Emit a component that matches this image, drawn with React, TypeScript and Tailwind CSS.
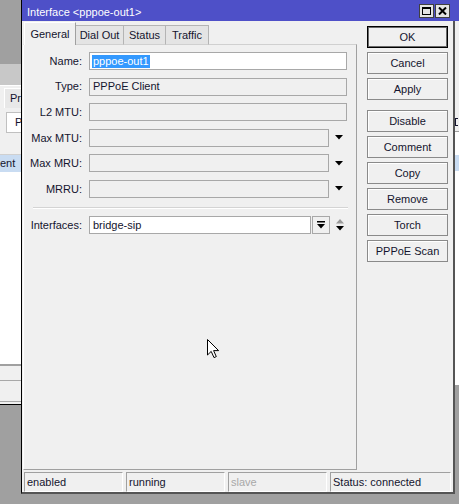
import React from "react";

const Arrow = ({ color = "#000" }: { color?: string }) => (
  <svg width="8" height="5" viewBox="0 0 8 5">
    <path d="M0 0 L8 0 L4 4.5 Z" fill={color} />
  </svg>
);

const Field = ({
  label,
  value,
  white,
  selected,
  narrow,
}: {
  label: string;
  value?: string;
  white?: boolean;
  selected?: boolean;
  narrow?: boolean;
}) => (
  <div className="flex items-center h-[18px]">
    <div className="w-[59px] text-right pr-[1px]">{label}</div>
    <div
      className={`ml-[6px] h-[18px] border border-[#a8a8a8] flex items-center pl-[2px] ${
        narrow ? "w-[240px]" : "w-[258px]"
      } ${white ? "bg-white" : "bg-[#f0f0f0]"}`}
    >
      {selected ? (
        <span className="bg-[#3399ff] text-white px-[1px] leading-[13px]">{value}</span>
      ) : (
        <span className="pl-[1px]">{value}</span>
      )}
    </div>
    {narrow && (
      <div className="ml-[6px] flex items-center">
        <Arrow />
      </div>
    )}
  </div>
);

const Btn = ({ label, focus }: { label: string; focus?: boolean }) => (
  <div
    className={`w-[81px] h-[22px] flex items-center justify-center bg-[#f0f0f0] border ${
      focus
        ? "border-black shadow-[inset_0_0_0_1px_#6a6a6a]"
        : "border-[#8a8a8a] shadow-[inset_1px_1px_0_#ffffff]"
    }`}
  >
    {label}
  </div>
);

const StatusCell = ({ text, w, dim }: { text: string; w: string; dim?: boolean }) => (
  <div
    className={`${w} h-[20px] border-t border-l border-[#a0a0a0] border-b border-r border-b-white border-r-white flex items-center pl-[2px] ${
      dim ? "text-[#a8a8a8]" : ""
    }`}
  >
    {text}
  </div>
);

function LeftStrip() {
  return (
    <div className="w-[21px] h-[504px] flex flex-col shrink-0 overflow-hidden">
      <div className="h-[64px]" />
      <div className="h-[22px] bg-[#c8c8c8] border-b border-white" />
      <div className="h-[22px] bg-[#f0f0f0] flex items-end">
        <div className="ml-[4px] h-[20px] flex-1 border-l border-t border-white bg-[#e8e8e8] pl-[5px] flex items-center whitespace-nowrap">
          Pr
        </div>
      </div>
      <div className="h-[29px] bg-[#f0f0f0] flex items-center">
        <div className="ml-[6px] h-[21px] flex-1 bg-white border border-[#c0c0c0] pl-[8px] flex items-center">
          P
        </div>
      </div>
      <div className="h-[18px] bg-[#f0f0f0] border-b border-[#d0d0d0]" />
      <div className="h-[17px] bg-[#c9dcf2] flex items-center whitespace-nowrap">ent</div>
      <div className="h-[192px] bg-white" />
      <div className="h-[2px] bg-[#a0a0a0]" />
      <div className="h-[14px] bg-[#f0f0f0]" />
      <div className="h-[1px] bg-[#a8a8a8]" />
      <div className="h-[20px] bg-[#f0f0f0]" />
      <div className="h-[1px] bg-[#a8a8a8]" />
      <div className="h-[2px] bg-[#f0f0f0]" />
      <div className="h-[1px] bg-black" />
    </div>
  );
}

function RightStrip() {
  return (
    <div className="w-[4px] flex flex-col shrink-0 overflow-hidden">
      <div className="h-[91px] bg-[#f0f0f0]" />
      <div className="h-[19px] bg-[#f0f0f0] flex items-center">
        <div className="w-[3px] h-[8px] border-l border-t border-b border-[#14142e]" />
      </div>
      <div className="h-[1px] bg-[#a0a0a0]" />
      <div className="h-[23px] bg-white" />
      <div className="h-[16px] bg-[#c9dcf2]" />
      <div className="h-[214px] bg-white" />
    </div>
  );
}

export default function App() {
  return (
    <div className="w-[459px] h-[504px] bg-[#a0a0a0] flex overflow-hidden relative font-['Liberation_Sans',Arial,sans-serif] text-[11px] text-[#14142e]">
      <LeftStrip />
      <div className="w-[438px] flex flex-col">
        {/* title bar */}
        <div className="h-[21px] border-l border-black bg-[#4e50c8] flex items-center pl-[5px] pr-[9px] text-white">
          <span className="flex-1 mt-[3px]">Interface &lt;pppoe-out1&gt;</span>
          <div className="flex gap-[1px] items-center">
            <div className="w-[15px] h-[14px] bg-[#e4e4e4] border border-[#404040] flex items-center justify-center">
              <div className="w-[9px] h-[8px] border border-black border-t-2" />
            </div>
            <div className="w-[15px] h-[14px] bg-[#e4e4e4] border border-[#404040] flex items-center justify-center">
              <svg width="9" height="8" viewBox="0 0 9 8">
                <path d="M1 0.5 L8 7.5 M8 0.5 L1 7.5" stroke="#000" strokeWidth="2" />
              </svg>
            </div>
          </div>
        </div>

        <div className="flex">
          <div className="w-[434px] h-[473px] border-l border-black border-r-2 border-b-2 border-r-[#555] border-b-[#555] bg-[#f0f0f0] flex flex-col">
            <div className="h-[450px] flex pl-[1px]">
              {/* left: tabs + panel */}
              <div className="w-[334px] flex flex-col pt-[1px]">
                <div className="h-[23px] flex items-end pl-[1px] relative z-10 -mb-[1px]">
                  <div className="w-[52px] h-[23px] bg-[#f0f0f0] border-t border-l border-white border-r border-r-[#a0a0a0] flex items-center justify-center">
                    General
                  </div>
                  <div className="w-[48px] h-[20px] bg-[#e4e4e4] border-t border-r border-[#b4b4b4] border-b border-b-[#d0d0d0] flex items-center justify-center">
                    Dial Out
                  </div>
                  <div className="w-[42px] h-[20px] bg-[#e4e4e4] border-t border-r border-[#b4b4b4] border-b border-b-[#d0d0d0] flex items-center justify-center">
                    Status
                  </div>
                  <div className="w-[43px] h-[20px] bg-[#e4e4e4] border-t border-r border-[#b4b4b4] border-b border-b-[#d0d0d0] flex items-center justify-center">
                    Traffic
                  </div>
                </div>
                <div className="h-[426px] border-t border-t-[#d0d0d0] border-l border-l-white border-r border-r-[#a0a0a0] border-b border-b-[#a0a0a0] flex flex-col pt-[7px]">
                  <div className="flex flex-col gap-[7.6px]">
                    <Field label="Name:" value="pppoe-out1" white selected />
                    <Field label="Type:" value="PPPoE Client" />
                    <Field label="L2 MTU:" />
                    <Field label="Max MTU:" narrow />
                    <Field label="Max MRU:" narrow />
                    <Field label="MRRU:" narrow />
                  </div>
                  <div className="ml-[9px] mt-[9px] w-[315px] h-[1px] bg-[#d4d4d4] border-b border-white box-content" />
                  <div className="flex items-center h-[18px] mt-[7px]">
                    <div className="w-[59px] text-right pr-[1px]">Interfaces:</div>
                    <div className="ml-[6px] w-[222px] h-[18px] border border-[#a8a8a8] bg-white flex items-center pl-[3px]">
                      bridge-sip
                    </div>
                    <div className="ml-[1px] w-[18px] h-[18px] border border-[#a8a8a8] bg-[#f0f0f0] flex items-center justify-center">
                      <svg width="8" height="8" viewBox="0 0 8 8">
                        <rect x="0" y="0" width="8" height="1.5" fill="#000" />
                        <path d="M0 3 L8 3 L4 7.5 Z" fill="#000" />
                      </svg>
                    </div>
                    <div className="ml-[6px] flex flex-col gap-[2px]">
                      <svg width="8" height="5" viewBox="0 0 8 5">
                        <path d="M0 4.5 L8 4.5 L4 0 Z" fill="#9a9a9a" />
                      </svg>
                      <Arrow />
                    </div>
                  </div>
                </div>
              </div>

              {/* right: buttons */}
              <div className="ml-[10px] pt-[5px] flex flex-col gap-[4px]">
                <Btn label="OK" focus />
                <Btn label="Cancel" />
                <Btn label="Apply" />
                <div className="mt-[6px]">
                  <Btn label="Disable" />
                </div>
                <Btn label="Comment" />
                <Btn label="Copy" />
                <Btn label="Remove" />
                <Btn label="Torch" />
                <Btn label="PPPoE Scan" />
              </div>
            </div>

            {/* status bar */}
            <div className="h-[21px] flex gap-[3px] pl-[2px] pt-[1px]">
              <StatusCell text="enabled" w="w-[99px]" />
              <StatusCell text="running" w="w-[99px]" />
              <StatusCell text="slave" w="w-[99px]" dim />
              <StatusCell text="Status: connected" w="w-[121px]" />
            </div>
          </div>
          <RightStrip />
        </div>
      </div>

      {/* mouse pointer */}
      <svg
        className="absolute left-[207px] top-[339px]"
        width="13"
        height="20"
        viewBox="0 0 13 20"
      >
        <path
          d="M0.5 0.5 L0.5 16 L4.2 12.4 L7 18.6 L9.3 17.6 L6.6 11.6 L11.6 11.6 Z"
          fill="#fff"
          stroke="#000"
          strokeWidth="1"
          strokeLinejoin="round"
        />
      </svg>
    </div>
  );
}
